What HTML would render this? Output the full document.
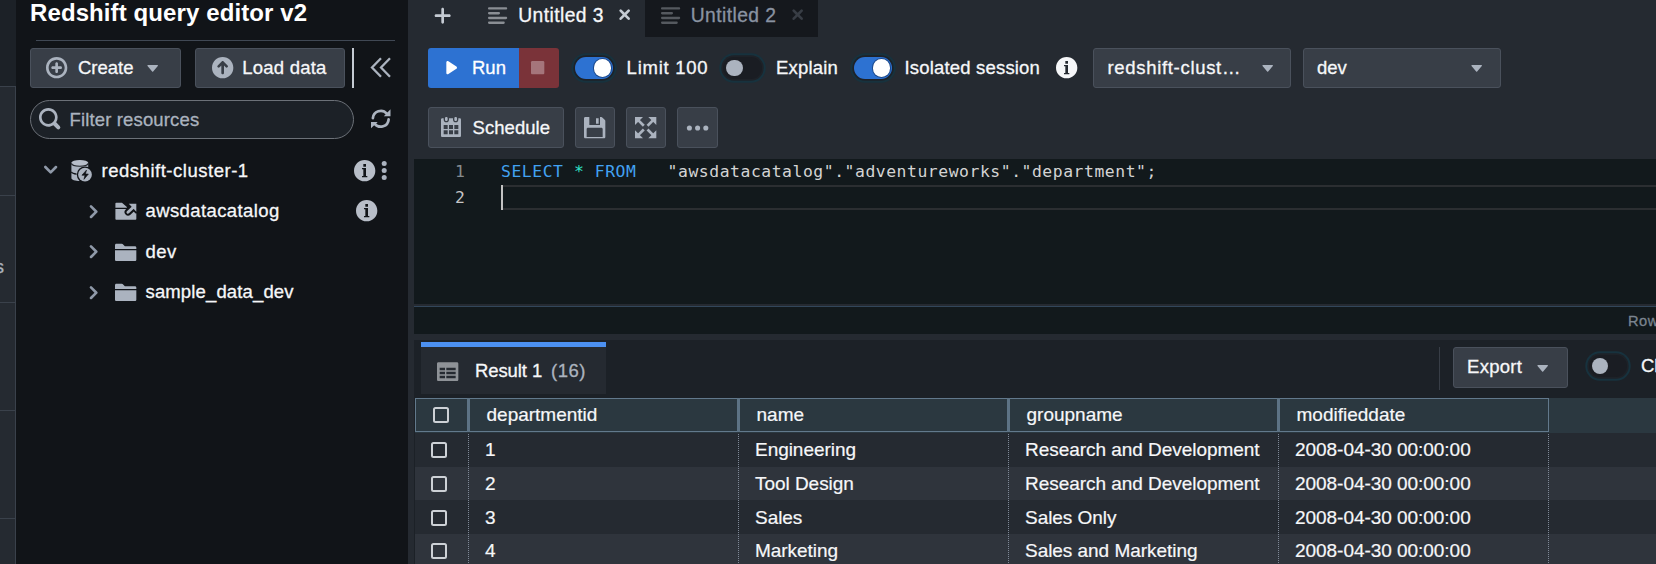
<!DOCTYPE html>
<html lang="en">
<head>
<meta charset="utf-8">
<title>Redshift query editor v2</title>
<style>
*{box-sizing:border-box;margin:0;padding:0}
html,body{width:1656px;height:564px;overflow:hidden;background:#252a31}
body{position:relative;font-family:"Liberation Sans",sans-serif;color:#f6f7f9;font-size:18.5px}
.a{position:absolute}
.t{position:absolute;white-space:nowrap;line-height:40px;height:40px;-webkit-text-stroke:.3px currentColor}
.btn{position:absolute;height:40px;background:#383e47;border:1px solid #4a515c;border-radius:3px}
svg{position:absolute;overflow:visible}
/* left strip */
#strip{left:0;top:0;width:16px;height:564px;background:#1c2127}
#strip b{position:absolute;left:0;top:86px;width:16px;height:478px;background:#252a31;border-right:1px solid #3a414b}
#strip i{position:absolute;left:0;width:15px;height:1px;background:#3a414b}
/* sidebar */
#side{left:16px;top:0;width:392px;height:564px;background:#111418}
#title{left:30px;top:-7px;font-size:24px;font-weight:bold;color:#fff;letter-spacing:0.1px;-webkit-text-stroke:0}
.tree{font-size:18.5px;color:#f6f7f9}
/* main */
#tab2{left:645px;top:0;width:173px;height:36.7px;background:#15181d}
.tabt{font-size:19.3px;line-height:30px;height:30px;letter-spacing:.4px}
/* editor */
#ed{left:414px;top:159px;width:1242px;height:144.7px;background:#12191c}
.mono{white-space:pre;font-family:"DejaVu Sans Mono","Liberation Mono",monospace;font-size:16.4px;letter-spacing:.542px;line-height:26px;height:26px;-webkit-text-stroke:0}
#split{left:414px;top:305.6px;width:1242px;height:1.4px;background:#32465a}
#status{left:414px;top:307px;width:1242px;height:26.8px;background:#12191c}
#res{left:414px;top:340px;width:1242px;height:224px;background:#1c2127}
/* table */
.th{position:absolute;top:398px;height:34px;background:#2b3840;border:1px solid #62798c;font-size:19px;line-height:32px;color:#f6f7f9;padding-left:16.5px;white-space:nowrap;-webkit-text-stroke:.2px currentColor}
.sep{position:absolute;top:398px;width:2.8px;height:34px;background:#5d7385}
.row{position:absolute;left:415px;width:1241px;height:34px}
.row.o{background:#252a31}
.row.e{background:#2f343c}
.td{position:absolute;font-size:19px;letter-spacing:-.04px;-webkit-text-stroke:.2px currentColor;margin-top:-.4px;line-height:35px;height:34px;white-space:nowrap;color:#f6f7f9}
.cb{position:absolute;width:16.2px;height:16.2px;border:2px solid #cdd1d6;border-radius:2.5px}
.vl{position:absolute;top:433.5px;width:1px;height:131px;background:repeating-linear-gradient(to bottom,#7f8997 0,#7f8997 1px,transparent 1px,transparent 2px)}
</style>
</head>
<body>
<div class="a" id="strip"><b></b><i style="top:86px"></i><i style="top:195px"></i><i style="top:302px"></i><i style="top:410px"></i><i style="top:518px"></i></div>
<div class="t" style="left:-5.2px;top:246.5px;font-size:18.5px;color:#abb3bf">s</div>

<div class="a" id="side"></div>
<div class="t" id="title">Redshift query editor v2</div>
<div class="a" style="left:36px;top:40px;width:359px;height:1px;background:#404854"></div>

<div class="btn" style="left:30px;top:48px;width:151px"></div>
<div class="t" style="left:78px;top:47.5px">Create</div>
<div class="btn" style="left:195px;top:48px;width:150px"></div>
<div class="t" style="left:242.3px;top:47.5px;letter-spacing:.22px">Load data</div>
<div class="a" style="left:352px;top:48px;width:2px;height:40px;background:#c5cbd3"></div>

<div class="a" style="left:30.4px;top:99.6px;width:323.6px;height:39.5px;border:1.2px solid #6c7178;border-radius:20px;background:#1c2127"></div>
<div class="t" style="left:69.6px;top:99.5px;color:#abb3bf;letter-spacing:.14px">Filter resources</div>

<div class="t tree" style="left:101.5px;top:150.5px;letter-spacing:.52px">redshift-cluster-1</div>
<div class="t tree" style="left:145.5px;top:191px;letter-spacing:.4px">awsdatacatalog</div>
<div class="t tree" style="left:145.5px;top:231.5px;letter-spacing:.5px">dev</div>
<div class="t tree" style="left:145.5px;top:272px;letter-spacing:.14px">sample_data_dev</div>

<!-- tabs -->
<div class="a" id="tab2"></div>
<div class="t tabt" style="left:518.3px;top:.8px">Untitled 3</div>
<div class="t tabt" style="left:690.8px;top:.8px;color:#8a93a2">Untitled 2</div>

<!-- toolbar row 1 -->
<div class="a" style="left:428px;top:48px;width:92px;height:40px;background:#2d72d2;border-radius:3px 0 0 3px"></div>
<div class="a" style="left:519px;top:48px;width:40px;height:40px;background:#7a3339;border-radius:0 3px 3px 0"></div>
<div class="t" style="left:472px;top:48px;color:#fff">Run</div>

<div class="t" style="left:626.6px;top:48px;letter-spacing:.75px">Limit 100</div>
<div class="t" style="left:776px;top:48px;letter-spacing:.2px">Explain</div>
<div class="t" style="left:904.5px;top:48px;letter-spacing:.18px">Isolated session</div>

<div class="btn" style="left:1093px;top:48px;width:198px"></div>
<div class="t" style="left:1107.5px;top:48px;letter-spacing:.68px">redshift-clust…</div>
<div class="btn" style="left:1303px;top:48px;width:198px"></div>
<div class="t" style="left:1317px;top:48px">dev</div>

<!-- toolbar row 2 -->
<div class="btn" style="left:428px;top:107.2px;width:136px;height:40.8px"></div>
<div class="t" style="left:472.5px;top:108px;letter-spacing:.06px">Schedule</div>
<div class="btn" style="left:575px;top:107.2px;width:40px;height:40.8px"></div>
<div class="btn" style="left:626px;top:107.2px;width:40px;height:40.8px"></div>
<div class="btn" style="left:677px;top:107.2px;width:41px;height:40.8px"></div>

<!-- editor -->
<div class="a" id="ed"></div>
<div class="a" style="left:501px;top:185px;width:1155px;height:25px;border-top:2px solid #2b2e31;border-bottom:2px solid #2b2e31"></div>
<div class="a" style="left:501px;top:184.8px;width:2px;height:25.2px;background:#c2c2c2"></div>
<div class="t mono" style="left:455px;top:158.9px;color:#858b8f">1</div>
<div class="t mono" style="left:455px;top:184.9px;color:#c6c6c6">2</div>
<div class="t mono" style="left:501px;top:158.9px;color:#d4d4d4"><span style="color:#42a2f2">SELECT</span> <span style="color:#2fe0c6">*</span> <span style="color:#42a2f2">FROM</span>   "awsdatacatalog"."adventureworks"."department";</div>
<div class="a" id="split"></div>
<div class="a" id="status"></div>
<div class="t" style="left:1628px;top:307.5px;line-height:27px;height:27px;font-size:14.67px;letter-spacing:.5px;color:#7b848f">Row</div>

<!-- results -->
<div class="a" id="res"></div>
<div class="a" style="left:421px;top:342px;width:185px;height:52px;background:#252a31;border-top:5px solid #4c90f0"></div>
<div class="t" style="left:475px;top:350.5px;letter-spacing:-.1px">Result 1</div><div class="t" style="left:551px;top:350.5px;color:#abb3bf;letter-spacing:.5px">(16)</div>
<div class="a" style="left:1439px;top:346.7px;width:1px;height:43px;background:#383e47"></div>
<div class="btn" style="left:1453px;top:347.3px;width:115px;height:40.3px"></div>
<div class="t" style="left:1467px;top:347px;letter-spacing:.3px">Export</div>
<div class="t" style="left:1641px;top:346px">Cl</div>

<!-- table -->
<div class="row o" style="top:432.7px"></div>
<div class="row e" style="top:466.5px"></div>
<div class="row o" style="top:500.3px"></div>
<div class="row e" style="top:534.1px"></div>
<div class="a" style="left:415px;top:397.7px;width:1241px;height:35px;background:#2b3840"></div>
<div class="th" style="left:415px;width:53.3px;padding:0"></div>
<div class="th" style="left:469px;width:269.3px">departmentid</div>
<div class="th" style="left:739px;width:269.3px">name</div>
<div class="th" style="left:1009px;width:269.3px">groupname</div>
<div class="th" style="left:1279px;width:269.5px">modifieddate</div><div class="sep" style="left:467.3px"></div><div class="sep" style="left:737.3px"></div><div class="sep" style="left:1007.3px"></div><div class="sep" style="left:1277.3px"></div>
<div class="vl" style="left:468px"></div>
<div class="vl" style="left:738px"></div>
<div class="vl" style="left:1008px"></div>
<div class="vl" style="left:1278px"></div>
<div class="vl" style="left:1548px"></div>

<div class="cb" style="left:432.6px;top:406.8px"></div>
<div class="cb" style="left:430.9px;top:441.9px"></div>
<div class="cb" style="left:430.9px;top:475.7px"></div>
<div class="cb" style="left:430.9px;top:509.5px"></div>
<div class="cb" style="left:430.9px;top:543.3px"></div>

<div class="td" style="left:485px;top:432px">1</div>
<div class="td" style="left:755px;top:432px">Engineering</div>
<div class="td" style="left:1025px;top:432px">Research and Development</div>
<div class="td" style="left:1295px;top:432px">2008-04-30 00:00:00</div>
<div class="td" style="left:485px;top:466px">2</div>
<div class="td" style="left:755px;top:466px">Tool Design</div>
<div class="td" style="left:1025px;top:466px">Research and Development</div>
<div class="td" style="left:1295px;top:466px">2008-04-30 00:00:00</div>
<div class="td" style="left:485px;top:500px">3</div>
<div class="td" style="left:755px;top:500px">Sales</div>
<div class="td" style="left:1025px;top:500px">Sales Only</div>
<div class="td" style="left:1295px;top:500px">2008-04-30 00:00:00</div>
<div class="td" style="left:485px;top:533px">4</div>
<div class="td" style="left:755px;top:533px">Marketing</div>
<div class="td" style="left:1025px;top:533px">Sales and Marketing</div>
<div class="td" style="left:1295px;top:533px">2008-04-30 00:00:00</div>

<!-- icons -->
<svg class="ic" style="left:46px;top:57px;width:21.33px;height:21.33px" viewBox="0 0 16 16" fill="#abb3bf"><path d="M10.990 6.990h-2v-2c0-.55-.45-1-1-1s-1 .45-1 1v2h-2c-.55 0-1 .45-1 1s.45 1 1 1h2v2c0 .55.45 1 1 1s1-.45 1-1v-2h2c.55 0 1-.45 1-1s-.45-1-1-1zm-3-7c-4.420 0-8 3.580-8 8s3.580 8 8 8 8-3.580 8-8-3.580-8-8-8zm0 14c-3.310 0-6-2.690-6-6s2.690-6 6-6 6 2.690 6 6-2.690 6-6 6z"/></svg>
<svg class="ic" style="left:141.6px;top:57.3px;width:21.33px;height:21.33px" viewBox="0 0 16 16" fill="#abb3bf"><path d="M12 6.5c0-.28-.22-.5-.5-.5h-7a.495.495 0 00-.37.83l3.5 4c.09.1.22.17.37.17s.28-.07.37-.17l3.5-4c.08-.09.13-.2.13-.33z"/></svg>
<svg class="ic" style="left:211.8px;top:57px;width:21.33px;height:21.33px" viewBox="0 0 16 16" fill="#abb3bf"><path d="M8 0C3.580 0 0 3.580 0 8s3.580 8 8 8 8-3.580 8-8-3.580-8-8-8zm3 8c-.28 0-.53-.11-.71-.29L9 6.410V12c0 .55-.45 1-1 1s-1-.45-1-1V6.410l-1.290 1.300a1.003 1.003 0 01-1.420-1.420l3-3C7.470 3.110 7.720 3 8 3s.53.11.71.29l3 3A1.003 1.003 0 0111 8z"/></svg>
<svg style="left:370px;top:57px;width:22px;height:22px" viewBox="0 0 22 22" fill="none" stroke="#abb3bf" stroke-width="2.3"><path d="M11 1.2L2 10.5l9 9.3M20 1.2l-9 9.3 9 9.3"/></svg>
<svg class="ic" style="left:38.7px;top:108px;width:21.33px;height:21.33px" viewBox="0 0 16 16" fill="#abb3bf"><path d="M15.55 13.43l-2.670-2.680a6.940 6.940 0 001.110-3.760c0-3.870-3.130-7-7-7s-7 3.130-7 7 3.130 7 7 7c1.390 0 2.680-.42 3.760-1.110l2.680 2.670a1.498 1.498 0 102.120-2.120zm-8.560-1.440c-2.760 0-5-2.240-5-5s2.240-5 5-5 5 2.240 5 5-2.240 5-5 5z"/></svg>
<svg style="left:370.9px;top:108.9px;width:19.5px;height:19.5px" viewBox="0 0 19.5 19.5"><g fill="none" stroke="#abb3bf" stroke-width="2.700" stroke-linecap="round"><path d="M1.87 9.20A7.9 7.9 0 0 1 15.80 4.67"/><path d="M17.63 10.30A7.9 7.9 0 0 1 3.70 14.83"/></g><path fill="#abb3bf" d="M19.500 .2V7.300H12.800zM0 19.300V12.900H6.700z"/></svg>
<svg class="ic" style="left:40px;top:159.3px;width:21.33px;height:21.33px" viewBox="0 0 16 16" fill="#8f99a8"><path d="M12 5c-.28 0-.53.11-.71.29L8 8.59l-3.290-3.300a1.003 1.003 0 00-1.420 1.420l4 4c.18.18.43.29.71.29s.53-.11.71-.29l4-4A1.003 1.003 0 0012 5z"/></svg>
<svg class="ic" style="left:83.3px;top:200.5px;width:21.33px;height:21.33px" viewBox="0 0 16 16" fill="#8f99a8"><path d="M10.71 7.29l-4-4a1.003 1.003 0 00-1.42 1.42L8.59 8 5.3 11.29c-.19.18-.3.43-.3.71a1.003 1.003 0 001.71.71l4-4c.18-.18.29-.43.29-.71 0-.28-.11-.53-.29-.71z"/></svg>
<svg class="ic" style="left:83.3px;top:241px;width:21.33px;height:21.33px" viewBox="0 0 16 16" fill="#8f99a8"><path d="M10.71 7.29l-4-4a1.003 1.003 0 00-1.42 1.42L8.59 8 5.3 11.29c-.19.18-.3.43-.3.71a1.003 1.003 0 001.71.71l4-4c.18-.18.29-.43.29-.71 0-.28-.11-.53-.29-.71z"/></svg>
<svg class="ic" style="left:83.3px;top:281.5px;width:21.33px;height:21.33px" viewBox="0 0 16 16" fill="#8f99a8"><path d="M10.71 7.29l-4-4a1.003 1.003 0 00-1.42 1.42L8.59 8 5.3 11.29c-.19.18-.3.43-.3.71a1.003 1.003 0 001.71.71l4-4c.18-.18.29-.43.29-.71 0-.28-.11-.53-.29-.71z"/></svg>
<svg class="ic" style="left:114.6px;top:240.5px;width:21.33px;height:21.33px" viewBox="0 0 16 16" fill="#abb3bf"><path d="M0 14c0 .55.45 1 1 1h14c.55 0 1-.45 1-1V7H0v7zM15 4H7.410L5.700 2.300a.965.965 0 00-.71-.3H1c-.55 0-1 .45-1 1v3h16V5c0-.55-.45-1-1-1z"/></svg>
<svg class="ic" style="left:114.6px;top:281px;width:21.33px;height:21.33px" viewBox="0 0 16 16" fill="#abb3bf"><path d="M0 14c0 .55.45 1 1 1h14c.55 0 1-.45 1-1V7H0v7zM15 4H7.410L5.700 2.300a.965.965 0 00-.71-.3H1c-.55 0-1 .45-1 1v3h16V5c0-.55-.45-1-1-1z"/></svg>
<svg class="ic" style="left:353.7px;top:159.8px;width:21.33px;height:21.33px" viewBox="0 0 16 16" fill="#b8bec8"><path d="M8 0C3.580 0 0 3.580 0 8s3.580 8 8 8 8-3.580 8-8-3.580-8-8-8zM7 3h2v2H7V3zm3 10H6v-1h1V7H6V6h3v6h1v1z"/></svg>
<svg class="ic" style="left:355.9px;top:200.2px;width:21.33px;height:21.33px" viewBox="0 0 16 16" fill="#b8bec8"><path d="M8 0C3.580 0 0 3.580 0 8s3.580 8 8 8 8-3.580 8-8-3.580-8-8-8zM7 3h2v2H7V3zm3 10H6v-1h1V7H6V6h3v6h1v1z"/></svg>
<svg style="left:380px;top:160px;width:8px;height:22px" viewBox="0 0 8 22" fill="#abb3bf"><circle cx="4.2" cy="3.5" r="2.5"/><circle cx="4.2" cy="10.4" r="2.5"/><circle cx="4.2" cy="17.4" r="2.5"/></svg>
<svg class="ic" style="left:432.3px;top:4.7px;width:21.33px;height:21.33px" viewBox="0 0 16 16" fill="#c5cbd3"><path d="M13 7H9V3c0-.55-.45-1-1-1s-1 .45-1 1v4H3c-.55 0-1 .45-1 1s.45 1 1 1h4v4c0 .55.45 1 1 1s1-.45 1-1V9h4c.55 0 1-.45 1-1s-.45-1-1-1z"/></svg>
<svg class="ic" style="left:488px;top:5.8px;width:19.2px;height:19.2px" viewBox="0 0 16 16" fill="#8a8e94"><path d="M13 13H1c-.55 0-1 .45-1 1s.45 1 1 1h12c.55 0 1-.45 1-1s-.45-1-1-1zM1 3h14c.55 0 1-.45 1-1s-.45-1-1-1H1c-.55 0-1 .45-1 1s.45 1 1 1zm0 4h8c.55 0 1-.45 1-1s-.45-1-1-1H1c-.55 0-1 .45-1 1s.45 1 1 1zm14 2H1c-.55 0-1 .45-1 1s.45 1 1 1h14c.55 0 1-.45 1-1s-.45-1-1-1z"/></svg>
<svg class="ic" style="left:613.9px;top:4.4px;width:21.33px;height:21.33px" viewBox="0 0 16 16" fill="#c5cbd3"><path d="M9.41 8l2.290-2.290c.19-.18.3-.43.3-.71a1.003 1.003 0 00-1.710-.71L8 6.590l-2.290-2.300a1.003 1.003 0 00-1.420 1.420L6.590 8 4.300 10.290c-.19.18-.3.43-.3.71a1.003 1.003 0 001.710.71L8 9.410l2.290 2.290c.18.19.43.3.71.3a1.003 1.003 0 00.71-1.710L9.410 8z"/></svg>
<svg class="ic" style="left:660.7px;top:5.8px;width:19.2px;height:19.2px" viewBox="0 0 16 16" fill="#55595f"><path d="M13 13H1c-.55 0-1 .45-1 1s.45 1 1 1h12c.55 0 1-.45 1-1s-.45-1-1-1zM1 3h14c.55 0 1-.45 1-1s-.45-1-1-1H1c-.55 0-1 .45-1 1s.45 1 1 1zm0 4h8c.55 0 1-.45 1-1s-.45-1-1-1H1c-.55 0-1 .45-1 1s.45 1 1 1zm14 2H1c-.55 0-1 .45-1 1s.45 1 1 1h14c.55 0 1-.45 1-1s-.45-1-1-1z"/></svg>
<svg class="ic" style="left:787.1px;top:4.4px;width:21.33px;height:21.33px" viewBox="0 0 16 16" fill="#383d45"><path d="M9.41 8l2.290-2.290c.19-.18.3-.43.3-.71a1.003 1.003 0 00-1.710-.71L8 6.590l-2.290-2.300a1.003 1.003 0 00-1.420 1.420L6.590 8 4.300 10.290c-.19.18-.3.43-.3.71a1.003 1.003 0 001.710.71L8 9.410l2.290 2.290c.18.19.43.3.71.3a1.003 1.003 0 00.71-1.710L9.410 8z"/></svg>
<svg class="ic" style="left:441px;top:57.1px;width:21.33px;height:21.33px" viewBox="0 0 16 16" fill="#ffffff"><path d="M12 8c0-.35-.19-.64-.46-.82l.01-.02-6-4-.01.02A.969.969 0 005 3c-.55 0-1 .45-1 1v8c0 .55.45 1 1 1 .21 0 .39-.08.54-.18l.01.02 6-4-.01-.02c.27-.18.46-.47.46-.82z"/></svg>
<svg class="ic" style="left:527px;top:57px;width:21.33px;height:21.33px" viewBox="0 0 16 16" fill="#a5757b"><path d="M12 3H4c-.55 0-1 .45-1 1v8c0 .55.45 1 1 1h8c.55 0 1-.45 1-1V4c0-.55-.45-1-1-1z"/></svg>
<svg class="ic" style="left:1056.3px;top:57.3px;width:21.33px;height:21.33px" viewBox="0 0 16 16" fill="#f6f7f9"><path d="M8 0C3.580 0 0 3.580 0 8s3.580 8 8 8 8-3.580 8-8-3.580-8-8-8zM7 3h2v2H7V3zm3 10H6v-1h1V7H6V6h3v6h1v1z"/></svg>
<svg class="ic" style="left:1257px;top:57.3px;width:21.33px;height:21.33px" viewBox="0 0 16 16" fill="#abb3bf"><path d="M12 6.5c0-.28-.22-.5-.5-.5h-7a.495.495 0 00-.37.83l3.5 4c.09.1.22.17.37.17s.28-.07.37-.17l3.5-4c.08-.09.13-.2.13-.33z"/></svg>
<svg class="ic" style="left:1466px;top:57.3px;width:21.33px;height:21.33px" viewBox="0 0 16 16" fill="#abb3bf"><path d="M12 6.5c0-.28-.22-.5-.5-.5h-7a.495.495 0 00-.37.83l3.5 4c.09.1.22.17.37.17s.28-.07.37-.17l3.5-4c.08-.09.13-.2.13-.33z"/></svg>
<svg class="ic" style="left:440.7px;top:117.3px;width:21.33px;height:21.33px" viewBox="0 0 16 16" fill="#abb3bf"><path d="M11 3c.6 0 1-.5 1-1V1c0-.6-.4-1-1-1s-1 .4-1 1v1c0 .5.4 1 1 1zm3-2h-1v1c0 1.100-.9 2-2 2s-2-.9-2-2V1H6v1c0 1.100-.9 2-2 2s-2-.9-2-2V1H1c-.6 0-1 .5-1 1v12c0 .6.4 1 1 1h13c.6 0 1-.4 1-1V2c0-.6-.5-1-1-1zM5 13H2v-3h3v3zm0-4H2V6h3v3zm4 4H6v-3h3v3zm0-4H6V6h3v3zm4 4h-3v-3h3v3zm0-4h-3V6h3v3zM4 3c.6 0 1-.5 1-1V1c0-.6-.4-1-1-1S3 .4 3 1v1c0 .5.4 1 1 1z"/></svg>
<svg class="ic" style="left:583.8px;top:117px;width:21.33px;height:21.33px" viewBox="0 0 16 16" fill="#abb3bf"><path d="M15.71 2.290l-2-2A.997.997 0 0013 0h-1v6H4V0H1C.45 0 0 .45 0 1v14c0 .55.45 1 1 1h14c.55 0 1-.45 1-1V3c0-.28-.11-.53-.29-.71zM14 15H2V9c0-.55.45-1 1-1h10c.55 0 1 .45 1 1v6zM11 1H9v4h2V1z"/></svg>
<svg class="ic" style="left:634.8px;top:117px;width:21.33px;height:21.33px" viewBox="0 0 16 16" fill="#abb3bf" stroke="#abb3bf" stroke-width="2"><g><path stroke="none" d="M0 0h6L0 6z"/><path d="M2 2l4.600 4.600" fill="none"/></g><g transform="matrix(-1 0 0 1 16 0)"><path stroke="none" d="M0 0h6L0 6z"/><path d="M2 2l4.600 4.600" fill="none"/></g><g transform="matrix(1 0 0 -1 0 16)"><path stroke="none" d="M0 0h6L0 6z"/><path d="M2 2l4.600 4.600" fill="none"/></g><g transform="matrix(-1 0 0 -1 16 16)"><path stroke="none" d="M0 0h6L0 6z"/><path d="M2 2l4.600 4.600" fill="none"/></g></svg>
<svg style="left:685px;top:124px;width:26px;height:8px" viewBox="0 0 26 8" fill="#abb3bf"><circle cx="4.4" cy="4" r="2.55"/><circle cx="12.6" cy="4" r="2.55"/><circle cx="20.8" cy="4" r="2.55"/></svg>
<svg class="ic" style="left:436.9px;top:360.6px;width:21.33px;height:21.33px" viewBox="0 0 16 16" fill="#8e9297"><path d="M15 1H1c-.55 0-1 .45-1 1v12c0 .55.45 1 1 1h14c.55 0 1-.45 1-1V2c0-.55-.45-1-1-1zM6 13H2v-2h4v2zm0-3H2V8h4v2zm0-3H2V5h4v2zm8 6H7v-2h7v2zm0-3H7V8h7v2zm0-3H7V5h7v2z"/></svg>
<svg class="ic" style="left:1532px;top:357px;width:21.33px;height:21.33px" viewBox="0 0 16 16" fill="#abb3bf"><path d="M12 6.5c0-.28-.22-.5-.5-.5h-7a.495.495 0 00-.37.83l3.5 4c.09.1.22.17.37.17s.28-.07.37-.17l3.5-4c.08-.09.13-.2.13-.33z"/></svg>
<svg class="ic" style="left:70.6px;top:159.9px;width:21.33px;height:21.33px" viewBox="0 0 16 16"><path fill="#abb3bf" d="M.3 2.100h12.600v11.400c0 1.300-2.800 2.300-6.300 2.300S.3 14.800.3 13.500z"/><ellipse cx="6.600" cy="2.050" rx="6.300" ry="2.050" fill="#b7bec9"/><path fill="none" stroke="#111418" stroke-width=".9" d="M.3 2.600c.3 1.200 2.900 2.100 6.300 2.100s6-.9 6.300-2.100" opacity=".9"/><path fill="none" stroke="#111418" stroke-width=".9" d="M.3 8.900c.4.800 1.800 1.400 3.900 1.700"/><circle cx="10.500" cy="11" r="6.150" fill="#111418"/><circle cx="10.500" cy="11" r="5.150" fill="#abb3bf"/><path fill="#111418" stroke="#111418" stroke-width=".5" stroke-linejoin="round" d="M11.600 7.600L8.200 11.400h2.300l-.75 3.100 3.250-3.950h-2.200z"/></svg>
<svg class="ic" style="left:114.6px;top:200.3px;width:21.33px;height:21.33px" viewBox="0 0 16 16"><path fill="#abb3bf" d="M.3 2.600c0-.35.250-.6.6-.6h4c.2 0 .4.100.55.250L8.900 5.300V5.800H.3zM.3 6.750H16V14.300c0 .35-.250.6-.6.6H.9c-.35 0-.6-.250-.6-.6z"/><g fill="#111418" stroke="#111418" stroke-width="2.600" stroke-linejoin="round"><path d="M10.350 2.800H16v6z"/><path fill="none" stroke-width="5.200" stroke-linecap="round" d="M13.300 5.800L9.800 9.100"/></g><path fill="#abb3bf" d="M10.350 2.800H16v6z"/><path fill="none" stroke="#abb3bf" stroke-width="2.200" stroke-linecap="round" d="M13.500 5.600L9.700 9.200"/></svg>
<div class="a" style="left:574.9px;top:57.3px;width:38.3px;height:21.3px;border-radius:11px;background:#2d72d2;box-shadow:0 0 0 1.7px #1e2228,0 0 0 3.7px #17323e"></div><div class="a" style="left:593.9px;top:59.3px;width:17.3px;height:17.3px;border-radius:9px;background:#ffffff;box-shadow:0 0 0 1px #1d4a8c"></div>
<div class="a" style="left:723.3px;top:57.3px;width:38.3px;height:21.3px;border-radius:11px;background:#1a1d23;box-shadow:0 0 0 1.7px #1e2228,0 0 0 3.7px #17323e"></div><div class="a" style="left:726.2px;top:59.8px;width:16.4px;height:16.4px;border-radius:9px;background:#abb3bf"></div>
<div class="a" style="left:853.8px;top:57.3px;width:38.3px;height:21.3px;border-radius:11px;background:#2d72d2;box-shadow:0 0 0 1.7px #1e2228,0 0 0 3.7px #17323e"></div><div class="a" style="left:872.8px;top:59.3px;width:17.3px;height:17.3px;border-radius:9px;background:#ffffff;box-shadow:0 0 0 1px #1d4a8c"></div>
<div class="a" style="left:1588.8px;top:355.4px;width:38.3px;height:21.3px;border-radius:11px;background:#1a1d23;box-shadow:0 0 0 1.7px #1e2228,0 0 0 3.7px #17323e"></div><div class="a" style="left:1591.7px;top:357.8px;width:16.4px;height:16.4px;border-radius:9px;background:#abb3bf"></div>
<!-- /icons -->
</body>
</html>
